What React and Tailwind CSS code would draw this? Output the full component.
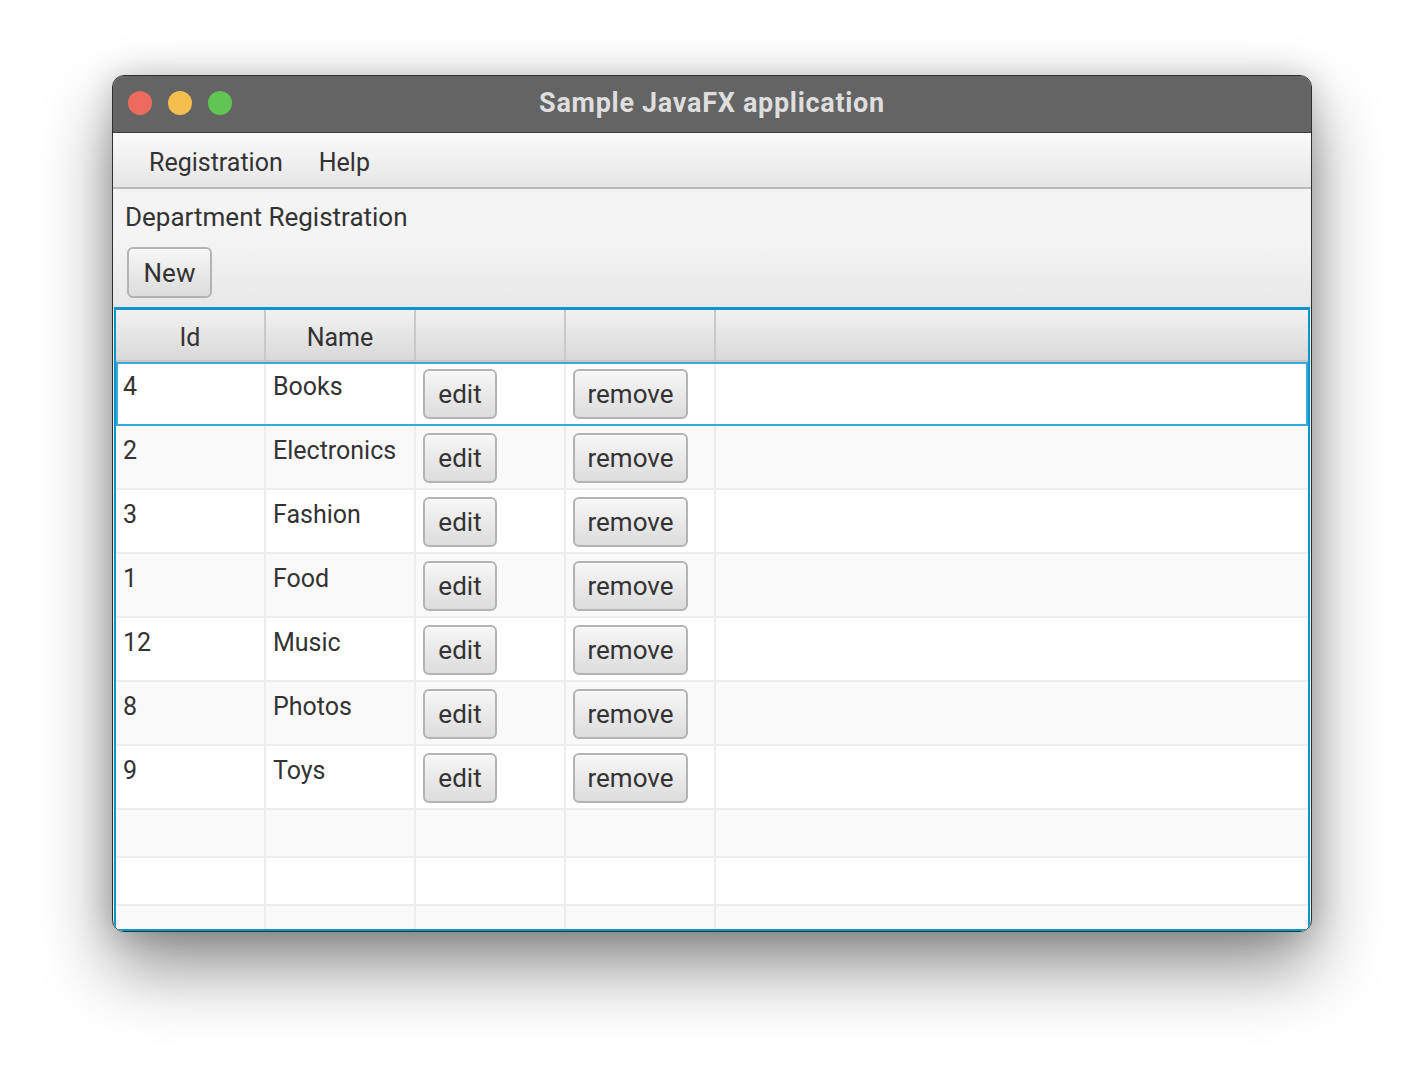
const rows = [
  { id: '4', name: 'Books' },
  { id: '2', name: 'Electronics' },
  { id: '3', name: 'Fashion' },
  { id: '1', name: 'Food' },
  { id: '12', name: 'Music' },
  { id: '8', name: 'Photos' },
  { id: '9', name: 'Toys' },
]

const FxButton = ({ children, className = '' }) => (
  <div className={`h-[50px] rounded-[6px] border-2 border-[#b3b3b3] bg-linear-to-b from-[#f7f7f7] to-[#dcdcdc] shadow-[inset_0_1px_0_#ffffff] flex items-center justify-center text-[26px] leading-none text-[#333] ${className}`}>
    {children}
  </div>
)

const App = () => {
  return (
    <div className="min-h-[1080px] w-[1424px] bg-white pt-[75px] pl-[112px]" style={{ fontFamily: 'Roboto, "Noto Sans", sans-serif' }}>
      <div className="w-[1200px] h-[857px] rounded-[12px] border border-[#2f2f2f] overflow-hidden flex flex-col bg-[#ececec] shadow-[0_35px_70px_rgba(0,0,0,0.45),0_0_30px_rgba(0,0,0,0.18)]">

        {/* title bar */}
        <div className="h-[57px] shrink-0 bg-[#646464] border-b border-[#3c3c3c] relative flex items-center justify-center pb-[2px]">
          <div className="absolute left-[15px] top-[15px] flex gap-[16px]">
            <div className="w-[24px] h-[24px] rounded-full bg-[#ed6a5e]" />
            <div className="w-[24px] h-[24px] rounded-full bg-[#f5bf4f]" />
            <div className="w-[24px] h-[24px] rounded-full bg-[#61c554]" />
          </div>
          <span className="text-[27px] font-bold text-[#dedede] tracking-[0.7px]">Sample JavaFX application</span>
        </div>

        {/* menu bar */}
        <div className="h-[56px] shrink-0 bg-linear-to-b from-[#fafafa] to-[#e6e6e6] border-b-2 border-[#b8b8b8] flex items-center pt-[6px] pl-[36px] gap-[36px] text-[25px] text-[#333]">
          <span>Registration</span>
          <span>Help</span>
        </div>

        {/* title label */}
        <div className="h-[46px] shrink-0 bg-[#f4f4f4] flex items-center pt-[10px] pl-[12px] text-[26px] text-[#333]">
          Department Registration
        </div>

        {/* toolbar */}
        <div className="h-[72px] shrink-0 bg-linear-to-b from-[#f5f5f5] to-[#e8e8e8] pt-[12px] pl-[14px]">
          <FxButton className="w-[85px] h-[51px]">New</FxButton>
        </div>

        {/* table */}
        <div className="flex-1 mx-px border-2 border-t-[3px] border-[#0a96cc] bg-white overflow-hidden flex flex-col">
          <div className="h-[52px] shrink-0 flex bg-linear-to-b from-[#f2f2f2] to-[#d9d9d9] border-b-2 border-[#c6c6c6] text-[25px] text-[#333]">
            <div className="w-[150px] border-r-2 border-[#c9c9c9] flex items-center justify-center pt-[6px]">Id</div>
            <div className="w-[150px] border-r-2 border-[#c9c9c9] flex items-center justify-center pt-[6px]">Name</div>
            <div className="w-[150px] border-r-2 border-[#c9c9c9]" />
            <div className="w-[150px] border-r-2 border-[#c9c9c9]" />
            <div className="flex-1" />
          </div>

          {rows.map((r, i) => (
            <div
              key={r.id}
              className={`h-[64px] shrink-0 flex border-b-2 border-[#ededed] text-[25px] text-[#333] ${i % 2 ? 'bg-[#f9f9f9]' : 'bg-white'} ${i === 0 ? 'outline-2 outline-[#36a9d9] -outline-offset-2' : ''}`}
            >
              <div className="w-[150px] border-r-2 border-[#ededed] pl-[7px] pt-[10px] leading-[30px]">{r.id}</div>
              <div className="w-[150px] border-r-2 border-[#ededed] pl-[7px] pt-[10px] leading-[30px]">{r.name}</div>
              <div className="w-[150px] border-r-2 border-[#ededed] pl-[7px] pt-[7px]">
                <FxButton className="w-[74px]">edit</FxButton>
              </div>
              <div className="w-[150px] border-r-2 border-[#ededed] pl-[7px] pt-[7px]">
                <FxButton className="w-[115px]">remove</FxButton>
              </div>
              <div className="flex-1" />
            </div>
          ))}

          {[0, 1, 2].map((k) => (
            <div key={k} className={`h-[48px] shrink-0 flex border-b-2 border-[#ededed] ${k % 2 ? 'bg-white' : 'bg-[#f9f9f9]'}`}>
              <div className="w-[150px] border-r-2 border-[#ededed]" />
              <div className="w-[150px] border-r-2 border-[#ededed]" />
              <div className="w-[150px] border-r-2 border-[#ededed]" />
              <div className="w-[150px] border-r-2 border-[#ededed]" />
              <div className="flex-1" />
            </div>
          ))}
        </div>
      </div>
    </div>
  )
}

export default App
